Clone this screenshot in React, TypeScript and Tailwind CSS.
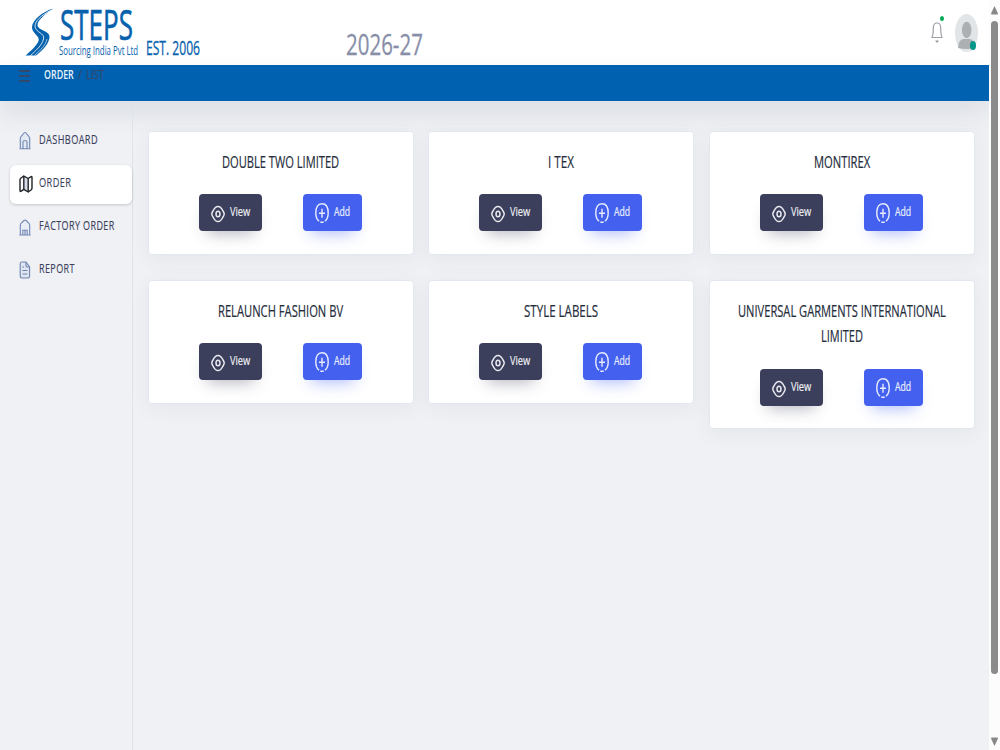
import React, { useLayoutEffect, useRef, useState } from 'react';

interface CondensedProps {
  width: number;
  className?: string;
  children: string;
}

// Narrows a single line of text to the given width
const Condensed: React.FC<CondensedProps> = ({ width, className = '', children }) => {
  const ref = useRef<HTMLSpanElement>(null);
  const [scale, setScale] = useState(1);

  useLayoutEffect(() => {
    if (ref.current) setScale(width / ref.current.offsetWidth);
  }, [width, children]);

  return (
    <span className={`block shrink-0 whitespace-nowrap ${className}`} style={{ width }}>
      <span ref={ref} className="inline-block origin-left align-top" style={{ transform: `scaleX(${scale})` }}>
        {children}
      </span>
    </span>
  );
};

interface Line {
  text: string;
  width: number;
}

const buyers: Line[][] = [
  [{ text: 'DOUBLE TWO LIMITED', width: 117 }],
  [{ text: 'I TEX', width: 26 }],
  [{ text: 'MONTIREX', width: 56 }],
  [{ text: 'RELAUNCH FASHION BV', width: 125 }],
  [{ text: 'STYLE LABELS', width: 74 }],
  [
    { text: 'UNIVERSAL GARMENTS INTERNATIONAL', width: 208 },
    { text: 'LIMITED', width: 42 },
  ],
];

const HomeIcon = () => (
  <svg className="h-[19px] w-3" viewBox="0 0 12 19" fill="none" stroke="#7187b5" strokeWidth="1.1">
    <path d="M1.3 17.5V7.2Q1.3 6.3 2 5.6L5 2Q6 .9 7 2L10 5.6Q10.7 6.3 10.7 7.2V17.5" fill="#e3e9f3" />
    <path d="M.5 17.8H11.5M4 17.5V11Q4 9.8 5 9.8H7Q8 9.8 8 11V17.5" />
  </svg>
);

const FactoryIcon = () => (
  <svg className="mt-px h-[17px] w-3" viewBox="0 0 12 17" fill="none" stroke="#7187b5" strokeWidth="1.1">
    <path d="M1.3 15.8V6Q1.3 5 2 4.4L5 1.5Q6 .6 7 1.5L10 4.4Q10.7 5 10.7 6V15.8" fill="#e9edf5" />
    <path d="M.3 16H11.7M3.8 15.8V11.3H8.2V15.8M6 11.3V15.8" />
  </svg>
);

const MapIcon = () => (
  <svg className="h-[18px] w-3.5" viewBox="0 0 14 18" fill="none" stroke="#202328" strokeWidth="1.4" strokeLinejoin="round">
    <path d="M4.8 1L9.2 3.5V17L4.8 14.3Z" fill="#d4dce9" />
    <path d="M4.8 1L2 3Q1 3.7 1 5V15.5Q1 17 2.2 16.1L4.8 14.3M9.2 3.5L11.8 1.8Q13 1 13 2.6V13Q13 14.2 12 15L9.2 17" />
  </svg>
);

const ReportIcon = () => (
  <svg className="h-[18px] w-3" viewBox="0 0 12 18" fill="none" stroke="#6e83b0" strokeWidth="1.1">
    <path d="M2.6 1H7L10.6 6V15Q10.6 17 9 17H3Q1.2 17 1.2 15V3Q1.2 1 2.6 1Z" fill="#dfe6f1" />
    <path d="M7 1V4.8Q7 6 8 6H10.6M3.4 6H5M3.4 9.5H8.5M3.4 13H8.5" />
  </svg>
);

const EyeIcon = () => (
  <svg className="h-[18px] w-3.5" viewBox="0 0 14 18" fill="none" stroke="#e9e9ef" strokeWidth="1.5">
    <path d="M.8 9Q.8 7.8 2 6Q4.2 1.4 7 1.4Q9.8 1.4 12 6Q13.2 7.8 13.2 9Q13.2 10.2 12 12Q9.8 16.6 7 16.6Q4.2 16.6 2 12Q.8 10.2 .8 9Z" />
    <ellipse cx="7" cy="9" rx="2" ry="2.8" />
  </svg>
);

const PlusIcon = () => (
  <svg className="h-[20px] w-3.5" viewBox="0 0 14 20" fill="none" stroke="#e8ecff" strokeWidth="1.4">
    <path d="M4 18.3Q.8 15.5 .8 10Q.8 .8 7 .8Q13.2 .8 13.2 10Q13.2 15.5 10 18.3M5.3 19.2H8.7M7 5.8V14.8M4 10.3H10" />
  </svg>
);

const Logo = () => (
  <svg className="h-[49px] w-[30px]" viewBox="0 0 30 49" fill="none">
    <path
      d="M28 .5C17 4 7.5 12 7 19C6.4 25 15.5 28 13.5 33C11.5 38 5 43.5 .5 47.5H11C18 42 24 36 24.5 29C25 22.5 12.5 22.5 12.5 17C12.5 12 21 5.5 28 .5Z"
      fill="#0762ae"
    />
    <path d="M25.5 2.5C16 7.5 10 13 10 18.5C10.5 24.5 20 25 18.5 31C17 37.5 11 42.5 5 48" stroke="#fff" strokeWidth=".8" />
    <path d="M22 31C21 37 15.5 42 9.5 47.5" stroke="#fff" strokeWidth=".6" />
  </svg>
);

const menu = [
  { label: 'DASHBOARD', width: 59, Icon: HomeIcon },
  { label: 'ORDER', width: 32, Icon: MapIcon, active: true },
  { label: 'FACTORY ORDER', width: 76, Icon: FactoryIcon },
  { label: 'REPORT', width: 36, Icon: ReportIcon },
];

const Header = () => (
  <header className="flex h-[65px] shrink-0 bg-white text-[#0762ae]">
    <div className="pl-[25px] pt-2">
      <Logo />
    </div>
    <div className="pl-1 pt-1">
      <Condensed width={73} className="pl-px text-[42px] leading-[40px] [-webkit-text-stroke:0.7px_#0762ae]">STEPS</Condensed>
      <Condensed width={79} className="mt-[-1px] text-[12.5px] leading-4">Sourcing India Pvt Ltd</Condensed>
    </div>
    <div className="ml-2 pt-[35px]">
      <Condensed width={54} className="text-[19.5px] leading-[25px] [-webkit-text-stroke:0.3px_#0762ae]">EST. 2006</Condensed>
    </div>
    <div className="ml-[146px] pt-[26px]">
      <Condensed width={77} className="text-[29px] leading-[35px] text-[#888ea8] [-webkit-text-stroke:0.3px_#888ea8]">2026-27</Condensed>
    </div>
    <div className="relative ml-auto mr-[11px] mt-[14px] flex h-[38px] w-[47px] justify-between">
      <svg className="mt-2 h-[22px] w-3" viewBox="0 0 12 22" fill="none" stroke="#9da0a6" strokeWidth="1.2">
        <path d="M1 15Q2.3 13 2.3 6Q2.3 1 6 1Q9.7 1 9.7 6Q9.7 13 11 15M.3 15.5H11.7M4.7 18.5L6 20L7.3 18.5" />
      </svg>
      <span className="absolute left-[9px] top-[2px] h-[5px] w-[4px] rounded-[50%] bg-[#00ab55]" />
      <svg className="h-[38px] w-[23px]" viewBox="0 0 23 38">
        <ellipse cx="11.5" cy="19" rx="11.5" ry="19" fill="#e2e5e7" />
        <ellipse cx="11.7" cy="16" rx="4.8" ry="8.3" fill="#adb0b2" />
        <path d="M3 34Q3.5 25 9 25H14Q19.5 25 20 34Q16 35 11.5 35Q7 35 3 34Z" fill="#adb0b2" />
      </svg>
      <span className="absolute left-[39px] top-[27px] h-[9px] w-[6px] rounded-[50%] bg-[#009688]" />
    </div>
  </header>
);

const Sidebar = () => (
  <aside className="w-[133px] shrink-0 border-r border-[#dfe3ea] pt-[21px]">
    {menu.map(({ label, width, Icon, active }) => (
      <div
        key={label}
        className={`mb-[4px] ml-[10px] flex h-[39px] items-center rounded-md pl-[8px] ${
          active ? 'bg-white shadow-[0_1px_3px_rgba(0,0,0,0.18)]' : ''
        }`}
      >
        <span className="flex w-[21px] shrink-0 justify-start pb-px pl-px">
          <Icon />
        </span>
        <Condensed
          width={width}
          className="pb-[4px] text-[13.5px] leading-[18px] tracking-[0.6px] text-[#3b3f5c] [-webkit-text-stroke:0.15px_#3b3f5c]"
        >
          {label}
        </Condensed>
      </div>
    ))}
  </aside>
);

const BuyerCard = ({ lines }: { lines: Line[] }) => (
  <div className="rounded-[4px] border border-[#e3e8f0] bg-white pb-[22.4px] pt-[17px] shadow-[0_4px_20px_rgba(90,88,120,0.07)]">
    {lines.map(({ text, width }) => (
      <div key={text} className="flex justify-center">
        <Condensed width={width} className="text-[17px] leading-[25.6px] text-[#252d3c] [-webkit-text-stroke:0.2px_#252d3c]">
          {text}
        </Condensed>
      </div>
    ))}
    <div className="mt-[19.8px] flex justify-center gap-[41px] pr-px text-[12.5px] font-medium leading-[18px]">
      <button className="flex h-[37px] w-[63px] rounded-[4px] bg-[#3b3f5c] pl-3 text-[#eeeef3] shadow-[0_10px_16px_-8px_rgba(59,63,92,0.4)]">
        <span className="mt-[11px]">
          <EyeIcon />
        </span>
        <Condensed width={20} className="ml-[5px] mt-[9px] [-webkit-text-stroke:0.2px_#eeeef3]">View</Condensed>
      </button>
      <button className="flex h-[37px] w-[59px] rounded-[4px] bg-[#4361ee] pl-3 text-[#edf0ff] shadow-[0_10px_16px_-8px_rgba(67,97,238,0.45)]">
        <span className="mt-[9px]">
          <PlusIcon />
        </span>
        <Condensed width={16} className="ml-[5px] mt-[9px] [-webkit-text-stroke:0.2px_#edf0ff]">Add</Condensed>
      </button>
    </div>
  </div>
);

const Scrollbar = () => (
  <div className="flex w-[11px] shrink-0 flex-col items-center bg-[#fcfcfc]">
    <svg className="mt-1.5 h-[9px] w-[7px]" viewBox="0 0 7 9">
      <path d="M3.5 0L7 7.5Q7 8.5 6 8.5H1Q0 8.5 0 7.5Z" fill="#888" />
    </svg>
    <div className="mt-1.5 h-[653px] w-[7px] rounded-full bg-[#8b8b8b]" />
    <svg className="mb-1 mt-auto h-[9px] w-[7px]" viewBox="0 0 7 9">
      <path d="M3.5 9L7 1.5Q7 .5 6 .5H1Q0 .5 0 1.5Z" fill="#888" />
    </svg>
  </div>
);

const App: React.FC = () => {
  return (
    <div className="flex h-[750px] w-[1000px] overflow-hidden bg-[#eff1f4] font-['Open_Sans','Noto_Sans',sans-serif]">
      <div className="flex min-w-0 flex-1 flex-col">
        <Header />
        <div className="flex h-[35.5px] shrink-0 bg-[#0061b0] pl-[19px] text-[13px] leading-[19px] shadow-[0_12px_24px_rgba(81,90,120,0.12)]">
          <svg className="mt-[5px] h-3 w-[11px]" viewBox="0 0 11 12" stroke="#33486d" strokeWidth="1.8">
            <path d="M0 1H11M0 6H11M0 11H11" />
          </svg>
          <Condensed width={30} className="ml-[14px] font-semibold text-[#eaf4fc]">ORDER</Condensed>
          <Condensed width={4} className="ml-1 text-[#33486d] [-webkit-text-stroke:0.3px_#33486d]">/</Condensed>
          <Condensed width={18} className="ml-[4px] text-[#33486d] [-webkit-text-stroke:0.3px_#33486d]">LIST</Condensed>
        </div>

        <div className="flex flex-1">
          <Sidebar />
          <main className="grid w-[841.5px] grid-cols-3 content-start items-start gap-x-[14.5px] gap-y-[25px] pl-[15px] pt-[30.5px]">
            {buyers.map((lines) => (
              <BuyerCard key={lines[0].text} lines={lines} />
            ))}
          </main>
        </div>
      </div>
      <Scrollbar />
    </div>
  );
};

export default App;
